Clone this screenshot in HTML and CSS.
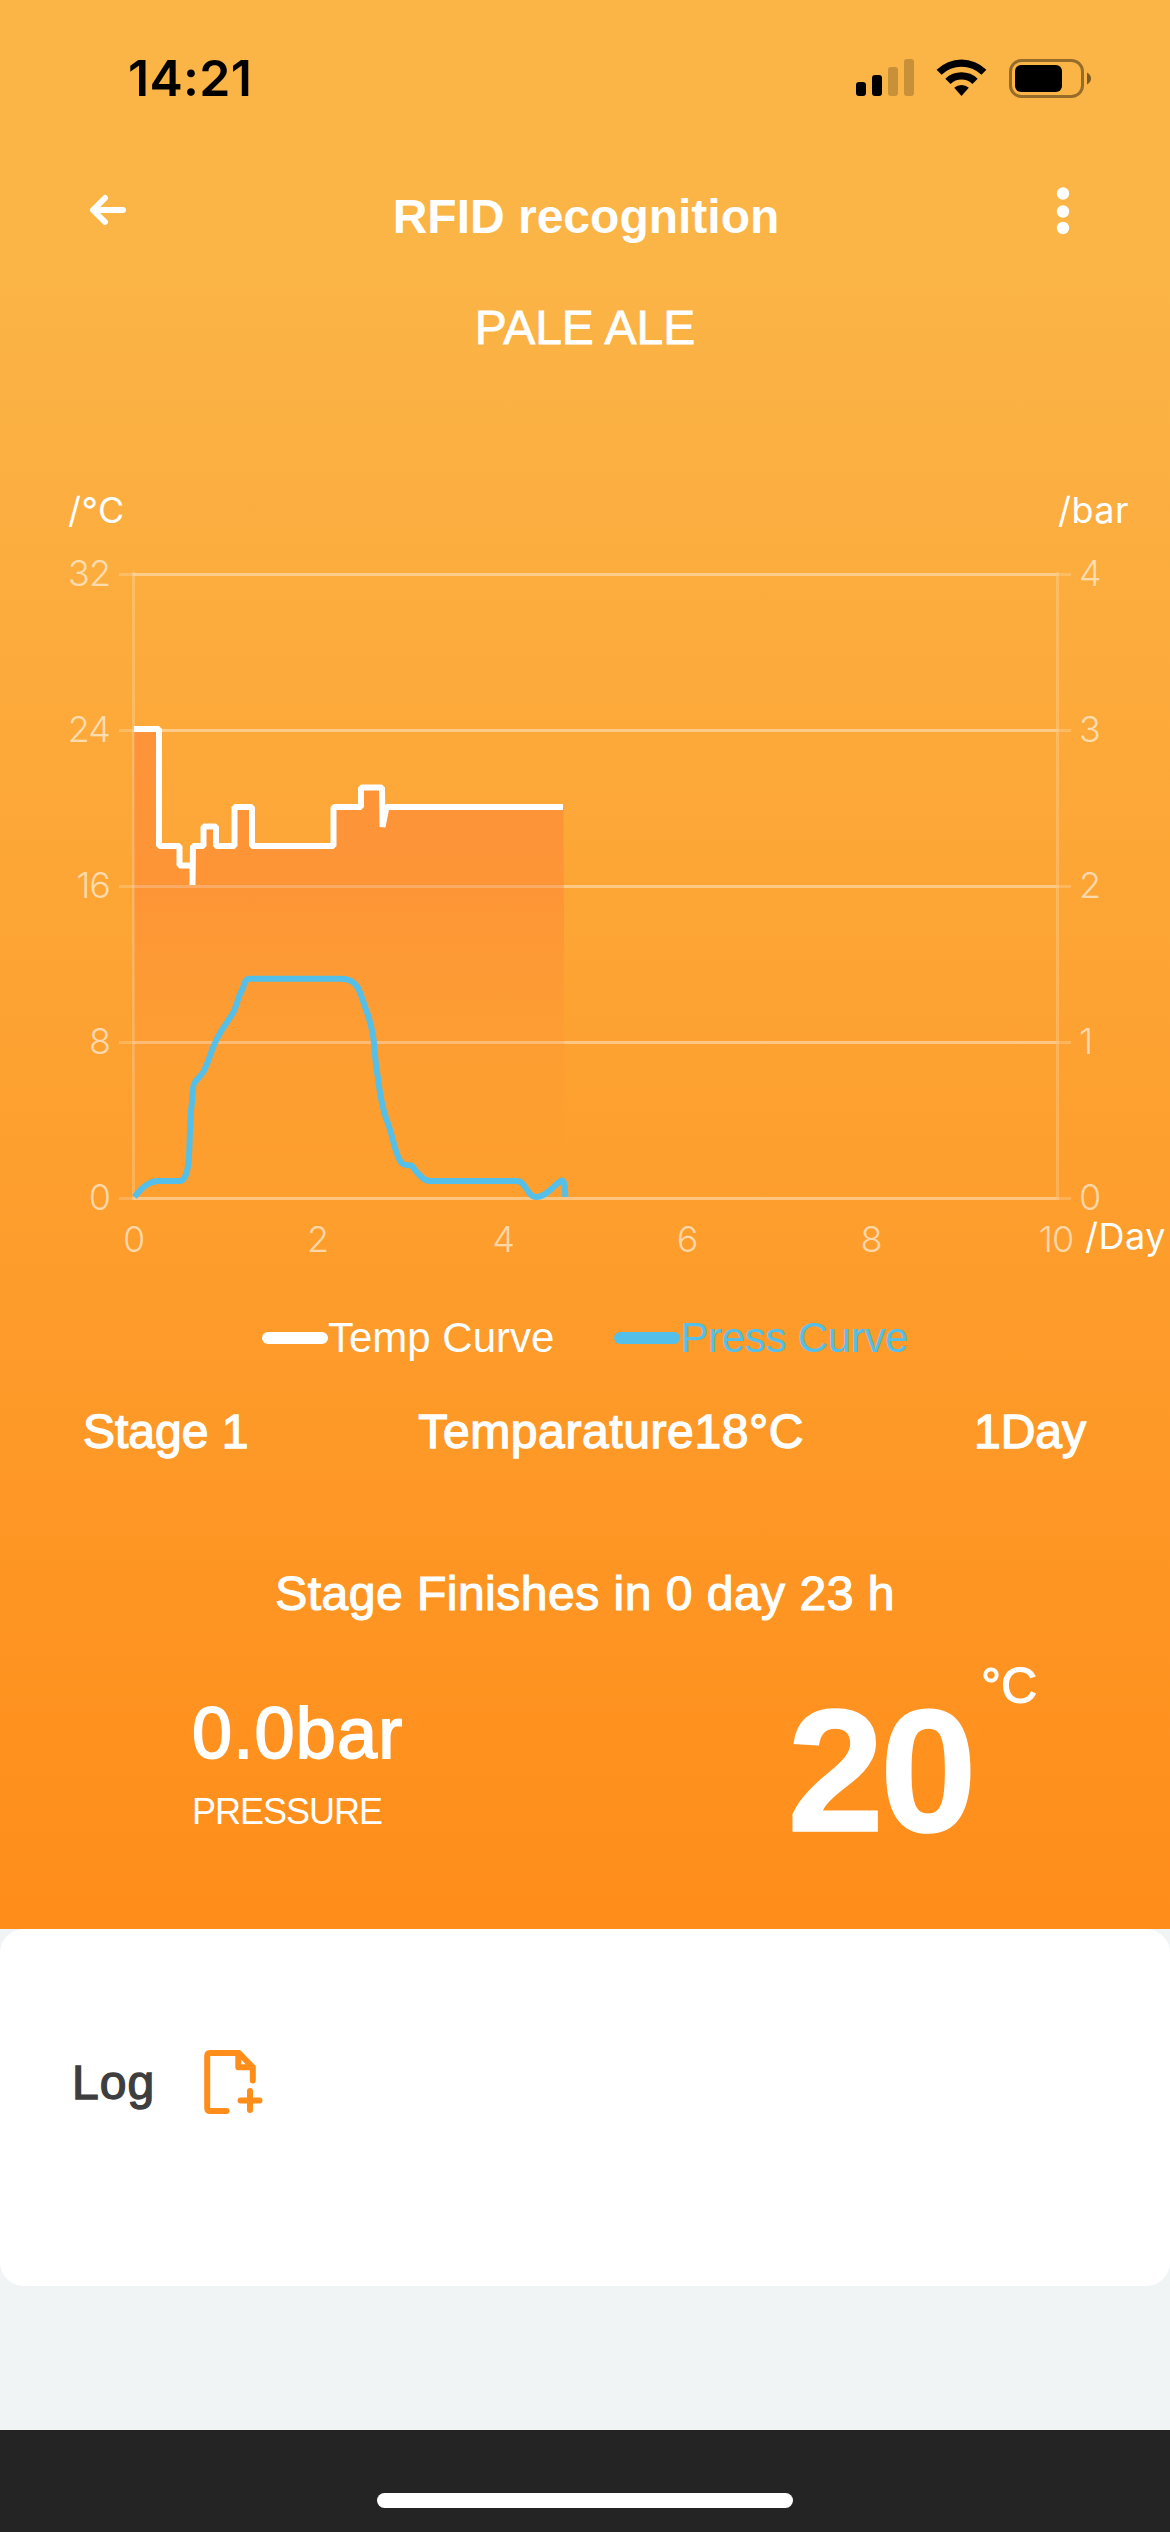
FILE: index.html
```html
<!DOCTYPE html>
<html lang="en">
<head>
    <meta charset="UTF-8">
    <meta name="viewport" content="width=device-width, initial-scale=1.0">
    <title>RFID recognition</title>
    <link rel="stylesheet" href="styles.css">
</head>
<body>
    <div class="top">
        <div class="status-bar">
            <div class="clock">14:21</div>
            <div class="status-icons">
                <svg class="signal" width="58" height="38" viewBox="0 0 58 38">
                    <rect x="0" y="23" width="10" height="14" rx="3"/>
                    <rect x="16" y="16" width="10" height="21" rx="3"/>
                    <rect class="weak" x="32" y="8" width="10" height="29" rx="3"/>
                    <rect class="weak" x="48" y="0" width="10" height="37" rx="3"/>
                </svg>
                <svg class="wifi" width="51" height="38" viewBox="0 0 51 38">
                    <path d="M0.6 10.8 A35.5 35.5 0 0 1 50.4 10.8 L45.4 15.8 A28.5 28.5 0 0 0 5.6 15.8 Z"/>
                    <path d="M9.3 19.8 A23 23 0 0 1 41.7 19.8 L36.4 25 A15.6 15.6 0 0 0 14.6 25 Z"/>
                    <path d="M18.2 28.8 A10.6 10.6 0 0 1 32.8 28.8 L25.5 37 Z"/>
                </svg>
                <svg class="battery" width="83" height="39" viewBox="0 0 83 39">
                    <rect class="shell" x="1.5" y="1.5" width="72" height="36" rx="11"/>
                    <rect x="6" y="6" width="47" height="27" rx="6"/>
                    <path class="cap" d="M78 13.5 Q82 16 82 19.5 Q82 23 78 25.5 Z"/>
                </svg>
            </div>
        </div>

        <div class="nav">
            <svg class="back" width="38" height="32" viewBox="0 0 38 32">
                <path d="M34 16 H4.5 M16 4 L4 16 L16 28"/>
            </svg>
            <div class="title">RFID recognition</div>
            <svg class="more" width="14" height="50" viewBox="0 0 14 50">
                <circle cx="7" cy="8.5" r="6.2"/>
                <circle cx="7" cy="26.5" r="6.2"/>
                <circle cx="7" cy="43" r="6.2"/>
            </svg>
        </div>
        <div class="beer-name">PALE ALE</div>

        <svg class="chart" width="1170" height="860" viewBox="0 0 1170 860">
            <defs>
                <linearGradient id="tempFill" x1="0" y1="0" x2="0" y2="1">
                    <stop offset="0" stop-color="#ff7a38" stop-opacity="0.45"/>
                    <stop offset="0.35" stop-color="#ff7a38" stop-opacity="0.38"/>
                    <stop offset="1" stop-color="#ff9a30" stop-opacity="0"/>
                </linearGradient>
            </defs>
            <!-- grid -->
            <path class="grid" d="M134 144.5 H1056 M134 300.5 H1056 M134 456.5 H1056 M134 612.5 H1056 M134 768.5 H1056"/>
            <path class="axis" d="M133.5 142 V770 M1057.5 142 V770"/>
            <path class="axis" d="M119 144.5 H134 M119 300.5 H134 M119 456.5 H134 M119 612.5 H134 M119 768.5 H134"/>
            <path class="axis" d="M1056 144.5 H1071 M1056 300.5 H1071 M1056 456.5 H1071 M1056 612.5 H1071 M1056 768.5 H1071"/>
            <!-- temperature -->
            <path class="temp-area" d="M134 299 H159 V416 H179.5 V435.5 H192.5 V416 H203.5 V396.5 H216 V416 H234.5 V377 H252 V416 H333.5 V377 H361 V357.5 H382 V397 L387 377 H563.5 L565 768 H134 Z"/>
            <path class="temp-line" d="M134 299 H159 V416 H179.5 V435.5 H192.5 V455 L193 416 H203.5 V396.5 H216 V416 H234.5 V377 H252 V416 H333.5 V377 H361 V357.5 H382 L382.5 397 L386.5 377 H563"/>
            <!-- pressure -->
            <path class="press-line" d="M134.5 767 C142 757 149 751 158 751 H179 C185 751 187 744 188.5 733 C190 716 189.5 695 191.5 676 C193 664 192 655 195 652 C198 648 200 647 203.5 641.5 C209 631 210 624 214.5 614 C220 600 229 591 234.5 580 C238 571 238 567 242 560 C245 553 245 548.7 249 548.7 H341 C350 549 354 552 358 558 C362 566 364 575 368 585 C371 595 373 603 374 613 C375 627 376 638 378 648 C380 666 382 676 386 688 C390 698 392 707 394.5 716 C397 724 398 729 402 733.5 C405 736 408 735 411.5 735.5 C416 741 422 750 429 751 H517 C526 751 527 767 536 767 C548 767 556 752 562 750.5 C564.5 750.5 565 756 565.3 767"/>
            <!-- labels -->
            <g class="tick end">
                <text x="110" y="156">32</text>
                <text x="110" y="312">24</text>
                <text x="110" y="468">16</text>
                <text x="110" y="624">8</text>
                <text x="110" y="780">0</text>
            </g>
            <g class="tick">
                <text x="1079" y="156">4</text>
                <text x="1079" y="312">3</text>
                <text x="1079" y="468">2</text>
                <text x="1079" y="624">1</text>
                <text x="1079" y="780">0</text>
            </g>
            <g class="tick middle">
                <text x="133.5" y="822">0</text>
                <text x="317.5" y="822">2</text>
                <text x="503" y="822">4</text>
                <text x="687" y="822">6</text>
                <text x="871" y="822">8</text>
                <text x="1056" y="822">10</text>
            </g>
            <g class="unit">
                <text x="68" y="93">/°C</text>
                <text x="1058" y="93">/bar</text>
                <text x="1085" y="819">/Day</text>
            </g>
        </svg>

        <div class="legend">
            <div class="legend-item"><i></i>Temp Curve</div>
            <div class="legend-item press"><i></i>Press Curve</div>
        </div>

        <div class="stage">
            <div class="stage-name">Stage 1</div>
            <div class="stage-temp">Temparature18°C</div>
            <div class="stage-days">1Day</div>
        </div>
        <div class="finish">Stage Finishes in 0 day 23 h</div>

        <div class="readings">
            <div class="pressure">
                <div class="pressure-value">0.0bar</div>
                <div class="pressure-label">PRESSURE</div>
            </div>
            <div class="temperature">
                <div class="temperature-value">20</div>
                <div class="temperature-unit">°C</div>
            </div>
        </div>
    </div>

    <div class="log">
        <div class="log-label">Log</div>
        <svg class="log-icon" width="60" height="66" viewBox="0 0 60 66">
            <path d="M23.5 61 H7.2 Q4.2 61 4.2 58 V6 Q4.2 3 7.2 3 H36 L49.8 17.3 V30.5 M35.3 4 V17.3 H49.8 M47 41 V60 M37.5 50.4 H56.5"/>
        </svg>
    </div>

    <div class="bottom-bar">
        <div class="home-indicator"></div>
    </div>
</body>
</html>
```

FILE: styles.css
```css
* {
    box-sizing: border-box;
}

body {
    margin: 0;
    width: 1170px;
    height: 2532px;
    display: flex;
    flex-direction: column;
    font-family: "Liberation Sans", Arial, sans-serif;
    background-color: #f0f4f5;
    overflow: hidden;
}

.top {
    height: 1929px;
    color: #fff;
    font-size: 48px;
    background: linear-gradient(#fbb446 0, #fbb446 270px, #ff8d1a 100%);
}

/* status bar */
.status-bar {
    height: 156px;
    padding: 0 78px 0 128px;
    display: flex;
    align-items: center;
    justify-content: space-between;
}

.clock {
    font-family: Inter, sans-serif;
    font-size: 50px;
    font-weight: 600;
    line-height: 60px;
    color: #000;
    letter-spacing: 0.3px;
}

.status-icons {
    display: flex;
    align-items: center;
    gap: 22px;
}

.weak {
    opacity: 0.2;
}

.shell {
    fill: none;
    stroke: #000;
    stroke-width: 3;
    opacity: 0.4;
}

.cap {
    opacity: 0.5;
}

/* nav */
.nav {
    height: 108px;
    padding: 0 100px 0 89px;
    display: flex;
    align-items: center;
    justify-content: space-between;
}

.back path {
    fill: none;
    stroke: #fff;
    stroke-width: 6;
    stroke-linecap: round;
    stroke-linejoin: round;
}

.more {
    fill: #fff;
}

.title {
    padding: 14px 11px 0 0;
    font-weight: bold;
    line-height: 60px;
}

.beer-name {
    margin-top: 34px;
    line-height: 60px;
    text-align: center;
    -webkit-text-stroke: 0.8px #fff;
}

/* chart */
.chart {
    display: block;
    margin-top: 72px;
    font-family: Inter, sans-serif;
    font-size: 36px;
}

.grid, .axis {
    fill: none;
    stroke: #fff;
    stroke-width: 3;
    stroke-opacity: 0.4;
}

.axis {
    stroke-opacity: 0.2;
}

.temp-area {
    fill: url(#tempFill);
}

.temp-line, .press-line {
    fill: none;
    stroke: #fff;
    stroke-width: 6;
    stroke-linejoin: bevel;
}

.press-line {
    stroke: #54bfe8;
}

.tick {
    fill: #fff;
    fill-opacity: 0.6;
    font-weight: 350;
    letter-spacing: -1px;
}

.end {
    text-anchor: end;
}

.middle {
    text-anchor: middle;
}

.unit {
    fill: #fff;
    letter-spacing: 0.5px;
}

/* legend */
.legend {
    margin-top: 18px;
    padding-left: 262px;
    display: flex;
    gap: 60px;
    font-size: 42px;
    line-height: 60px;
}

.legend-item {
    display: flex;
    align-items: center;
}

.legend-item i {
    width: 66px;
    height: 12px;
    border-radius: 6px;
    background-color: currentColor;
}

.press {
    color: #54bfe8;
    letter-spacing: -0.3px;
}

/* stage */
.stage {
    margin-top: 34px;
    padding: 0 84px 0 83px;
    display: flex;
    justify-content: space-between;
    line-height: 60px;
    -webkit-text-stroke: 1.4px #fff;
}

.stage-temp {
    letter-spacing: 0.6px;
}

.finish {
    margin-top: 102px;
    line-height: 60px;
    text-align: center;
    letter-spacing: 0.5px;
    -webkit-text-stroke: 1.2px #fff;
}

.readings {
    display: flex;
    justify-content: space-between;
    padding: 32px 133px 0 192px;
}

.pressure {
    padding-top: 32px;
}

.pressure-value {
    font-size: 72px;
    line-height: 90px;
    letter-spacing: 1.2px;
    -webkit-text-stroke: 1.8px #fff;
}

.pressure-label {
    margin-top: 12px;
    font-size: 36px;
    line-height: 44px;
    letter-spacing: -1px;
}

.temperature {
    display: flex;
    gap: 8px;
}

.temperature-value {
    padding-top: 30px;
    font-size: 174px;
    font-weight: bold;
    line-height: 170px;
    letter-spacing: -4px;
    -webkit-text-stroke: 1.5px #fff;
}

.temperature-unit {
    font-size: 50px;
    line-height: 60px;
    -webkit-text-stroke: 1.2px #fff;
}

/* log card */
.log {
    height: 357px;
    padding: 121px 0 0 72px;
    display: flex;
    align-items: flex-start;
    background-color: #fff;
    border-radius: 24px;
}

.log-label {
    width: 131px;
    padding-top: 3px;
    font-size: 48px;
    line-height: 60px;
    letter-spacing: 1px;
    color: #3e3e3e;
    -webkit-text-stroke: 1.4px #3e3e3e;
}

.log-icon path {
    fill: none;
    stroke: #ff8d1a;
    stroke-width: 6;
    stroke-linecap: round;
    stroke-linejoin: round;
}

/* bottom */
.bottom-bar {
    height: 102px;
    margin-top: auto;
    padding-top: 63px;
    background-color: #242424;
}

.home-indicator {
    width: 416px;
    height: 15px;
    margin: 0 auto;
    border-radius: 8px;
    background-color: #fff;
}
```
